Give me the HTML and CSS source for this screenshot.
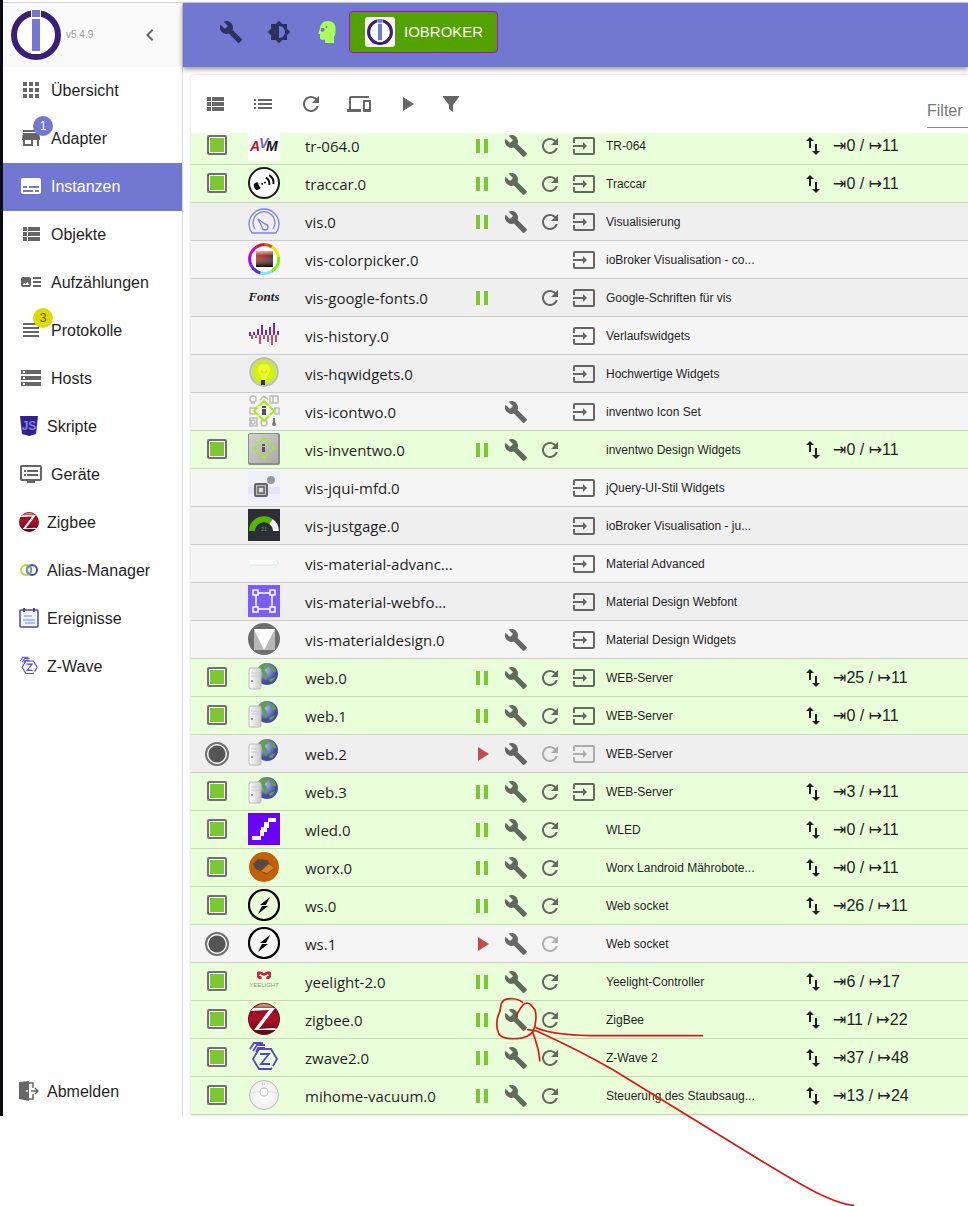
FILE: index.html
```
<!DOCTYPE html>
<html lang="de">
<head>
<meta charset="utf-8">
<title>ioBroker – Instanzen</title>
<link rel="stylesheet" href="styles.css">
</head>
<body>
<svg class="sprite" width="0" height="0" aria-hidden="true">
  <defs>
    <linearGradient id="g-red" x1="0" y1="0" x2="0" y2="1"><stop offset="0" stop-color="#e8b9a0"/><stop offset=".2" stop-color="#8e1020"/><stop offset=".5" stop-color="#b01128"/><stop offset="1" stop-color="#5c0812"/></linearGradient>
    <linearGradient id="g-grey" x1="0" y1="0" x2="1" y2="1"><stop offset="0" stop-color="#d2d2d2"/><stop offset="1" stop-color="#aaa"/></linearGradient>
    <linearGradient id="g-server" x1="0" y1="0" x2="1" y2="0"><stop offset="0" stop-color="#fff"/><stop offset="1" stop-color="#c9c9c9"/></linearGradient>
    <linearGradient id="g-dark" x1="0" y1="0" x2="1" y2="1"><stop offset="0" stop-color="#e03a3a"/><stop offset=".5" stop-color="#8a3030"/><stop offset="1" stop-color="#111"/></linearGradient>
    <linearGradient id="g-fade" x1="0" y1="0" x2="0" y2="1"><stop offset="0" stop-color="#fff" stop-opacity=".6"/><stop offset=".3" stop-color="#fff" stop-opacity="0"/><stop offset="1" stop-color="#000" stop-opacity=".9"/></linearGradient>
    <radialGradient id="g-bulb"><stop offset="0" stop-color="#eaff2c"/><stop offset=".6" stop-color="#d2f500"/><stop offset="1" stop-color="#c6d39a"/></radialGradient>
    <radialGradient id="g-globe" cx=".4" cy=".35"><stop offset="0" stop-color="#b4bdf4"/><stop offset=".6" stop-color="#757ed6"/><stop offset="1" stop-color="#474c98"/></radialGradient>
    <radialGradient id="g-vac"><stop offset="0" stop-color="#fff"/><stop offset="1" stop-color="#ececec"/></radialGradient>
  </defs>
  <symbol id="i-build" viewBox="0 0 24 24"><path d="M22.7 19l-9.1-9.1c.9-2.3.4-5-1.5-6.9-2-2-5-2.4-7.4-1.3L9 6 6 9 1.6 4.7C.4 7.1.9 10.1 2.9 12.1c1.9 1.9 4.6 2.4 6.9 1.5l9.1 9.1c.4.4 1 .4 1.4 0l2.3-2.3c.5-.4.5-1.1.1-1.4z"/></symbol>
  <symbol id="i-refresh" viewBox="0 0 24 24"><path d="M17.65 6.35C16.2 4.9 14.21 4 12 4c-4.42 0-7.99 3.58-7.99 8s3.57 8 7.99 8c3.73 0 6.84-2.55 7.73-6h-2.08c-.82 2.33-3.04 4-5.65 4-3.31 0-6-2.69-6-6s2.69-6 6-6c1.66 0 3.14.69 4.22 1.78L13 11h7V4l-2.35 2.35z"/></symbol>
  <symbol id="i-input" viewBox="0 0 24 24"><path d="M21 3.01H3c-1.1 0-2 .9-2 2V9h2V4.99h18v14.03H3V15H1v4.01c0 1.1.9 1.98 2 1.98h18c1.1 0 2-.88 2-1.98v-14c0-1.11-.9-2-2-2zM11 16l4-4-4-4v3H1v2h10v3z"/></symbol>
  <symbol id="i-pause" viewBox="0 0 24 24"><path d="M6 19h4V5H6v14zm8-14v14h4V5h-4z"/></symbol>
  <symbol id="i-play" viewBox="0 0 24 24"><path d="M8 5v14l11-7z"/></symbol>
  <symbol id="i-swap" viewBox="0 0 24 24"><path d="M9 3L5 6.99h3V14h2V6.99h3L9 3zm7 14.01V10h-2v7.01h-3L15 21l4-3.99h-3z"/></symbol>
  <symbol id="i-brightness" viewBox="0 0 24 24"><path d="M20 15.31L23.31 12 20 8.69V4h-4.69L12 .69 8.69 4H4v4.69L.69 12 4 15.31V20h4.69L12 23.31 15.31 20H20v-4.69zM12 18V6c3.31 0 6 2.69 6 6s-2.69 6-6 6z"/></symbol>
  <symbol id="i-head" viewBox="0 0 24 24"><path fill-rule="evenodd" d="M13 1C8 1 5.200 4.500 5 8.500L3.500 13c-.2.600.2 1 .7 1H5v4c0 1 .6 1.700 1.600 1.700H10V23h9v-6c1-1.500 1.500-3.500 1.500-6V8C20.500 4 17.500 1 13 1zM7.600 7.800a2 2 0 1 0 0 4 2 2 0 0 0 0-4zM11.500 6a1 1 0 1 0 0 2 1 1 0 0 0 0-2z"/></symbol>
  <symbol id="i-chevron" viewBox="0 0 24 24"><path d="M15.410 7.410L14 6l-6 6 6 6 1.410-1.410L10.830 12z"/></symbol>
  <symbol id="i-apps" viewBox="0 0 24 24"><path d="M4 8h4V4H4v4zm6 12h4v-4h-4v4zm-6 0h4v-4H4v4zm0-6h4v-4H4v4zm6 0h4v-4h-4v4zm6-10v4h4V4h-4zm-6 4h4V4h-4v4zm6 6h4v-4h-4v4zm0 6h4v-4h-4v4z"/></symbol>
  <symbol id="i-store" viewBox="0 0 24 24"><path d="M20 4H4v2h16V4zm1 10v-2l-1-5H4l-1 5v2h1v6h10v-6h4v6h2v-6h1zm-9 4H6v-4h6v4z"/></symbol>
  <symbol id="i-subtitles" viewBox="0 0 24 24"><path d="M20 4H4c-1.100 0-2 .9-2 2v12c0 1.100.9 2 2 2h16c1.100 0 2-.9 2-2V6c0-1.100-.9-2-2-2zM4 12h4v2H4v-2zm10 6H4v-2h10v2zm6 0h-4v-2h4v2zm0-4H10v-2h10v2z"/></symbol>
  <symbol id="i-viewlist" viewBox="0 0 24 24"><path d="M4 14h4v-4H4v4zm0 5h4v-4H4v4zM4 9h4V5H4v4zm5 5h12v-4H9v4zm0 5h12v-4H9v4zM9 5v4h12V5H9z"/></symbol>
  <symbol id="i-list" viewBox="0 0 24 24"><path d="M3 13h2v-2H3v2zm0 4h2v-2H3v2zm0-8h2V7H3v2zm4 4h14v-2H7v2zm0 4h14v-2H7v2zM7 7v2h14V7H7z"/></symbol>
  <symbol id="i-devices" viewBox="0 0 24 24"><path d="M4 6h18V4H4c-1.100 0-2 .9-2 2v11H0v3h14v-3H4V6zm19 2h-6c-.55 0-1 .45-1 1v10c0 .55.45 1 1 1h6c.55 0 1-.45 1-1V9c0-.55-.45-1-1-1zm-1 9h-4v-7h4v7z"/></symbol>
  <symbol id="i-filter" viewBox="0 0 24 24"><path d="M4 4h16v1l-6 8v7l-4-3v-4L4 5z"/></symbol>
  <symbol id="i-arttrack" viewBox="0 0 24 24"><path d="M22 13h-8v-2h8v2zm0-6h-8v2h8V7zm-8 10h8v-2h-8v2zm-2-8v6c0 1.100-.9 2-2 2H4c-1.100 0-2-.9-2-2V9c0-1.100.9-2 2-2h6c1.100 0 2 .9 2 2zm-1.500 6l-2.250-3-1.750 2.260-1.250-1.510L3.500 15h7z"/></symbol>
  <symbol id="i-headline" viewBox="0 0 24 24"><path d="M4 15h16v-2H4v2zm0 4h16v-2H4v2zm0-8h16V9H4v2zm0-6v2h16V5H4z"/></symbol>
  <symbol id="i-storage" viewBox="0 0 24 24"><path d="M2 20h20v-4H2v4zm2-3h2v2H4v-2zM2 4v4h20V4H2zm4 3H4V5h2v2zm-4 7h20v-4H2v4zm2-3h2v2H4v-2z"/></symbol>
  <symbol id="i-dvr" viewBox="0 0 24 24"><path d="M21 3H3c-1.100 0-2 .9-2 2v12c0 1.100.9 2 2 2h5v2h8v-2h5c1.100 0 2-.9 2-2V5c0-1.100-.9-2-2-2zm0 14H3V5h18v12zm-2-9H8v2h11V8zm0 4H8v2h11v-2zM7 8H5v2h2V8zm0 4H5v2h2v-2z"/></symbol>
  <symbol id="i-logout" viewBox="0 0 20 20"><path fill="#666" d="M0 1l10-1v20L0 18z"/><path d="M10 2h4v5M14 13v5h-4M12 10h6M16 7l3 3-3 3" fill="none" stroke="#666" stroke-width="1.500"/><circle cx="8" cy="10" r="1" fill="#fff"/></symbol>

  <symbol id="logo-iob" viewBox="0 0 50 50"><circle cx="25" cy="25" r="22" fill="#fff" stroke="#3a1f78" stroke-width="6"/><path fill="#fff" d="M20 0h10v44H20z"/><path fill="#7277d2" d="M21 0h8v7h-8zM21 9h8v32h-8z"/></symbol>
  <symbol id="l-js" viewBox="0 0 20 20"><path fill="#34208a" d="M1 0h18l-2 18-7 2-7-2z"/><text x="10" y="14" text-anchor="middle" font-size="12" font-weight="bold" fill="#7c81e0">JS</text></symbol>
  <symbol id="l-zigbee" viewBox="0 0 32 32"><circle cx="16" cy="16" r="16" fill="#64101a"/><circle cx="16" cy="16" r="15" fill="url(#g-red)"/><path fill="#fff" d="M5 5h22L11 26l14-1 5 1-3 1H6L21 7 3 8z"/></symbol>
  <symbol id="l-alias" viewBox="0 0 20 20"><g fill="none" stroke-width="2"><circle cx="7" cy="10" r="5" stroke="#bdd23a"/><circle cx="13" cy="10" r="5" stroke="#4b4da0"/><ellipse cx="10" cy="10" rx="2" ry="4" stroke="#6f98a0"/></g></symbol>
  <symbol id="l-events" viewBox="0 0 20 20"><rect x="1" y="2" width="18" height="17" rx="1" fill="#f1f4ff" stroke="#4f4c9c" stroke-width="1.500"/><path d="M5 0v4M15 0v4" stroke="#4f4c9c" stroke-width="2"/><path d="M5 8h8M4 12h12M6 15h10" stroke="#9aaee8" stroke-width="1.300"/></symbol>
  <symbol id="l-zwave" viewBox="0 0 32 32"><g fill="none" stroke="#5347c8" stroke-width="1.800"><path d="M24 27l-1 1H11L5 18l6-10h12l6 10-4 7"/><path d="M12 13h9l-8 10h9"/><path d="M8 11l2-4h7M5 10l4-6h8M2 8l4-6h9"/></g></symbol>
  <symbol id="l-avm" viewBox="0 0 32 32"><path fill="#fff" d="M0 0h32v32H0z"/><g font-size="14" font-weight="bold" font-style="italic"><text x="2" y="22" fill="#b01828">A</text><text x="18" y="22" fill="#111">M</text><text x="11" y="19" fill="#6a5fe0">V</text></g></symbol>
  <symbol id="l-traccar" viewBox="0 0 32 32"><circle cx="16" cy="16" r="15" fill="#fff" stroke="#1c1c1c" stroke-width="2"/><g transform="rotate(-25 16 16)" fill="#111"><path d="M6 13c2-1 4-1 5 0-1 2-1 4 0 6-2 1-4 1-5 0-1-2-1-4 0-6z"/><circle cx="14" cy="16" r="1"/><circle cx="17" cy="16" r="1"/><path d="M20 12c2 3 2 5 0 8M24 11c2 3 2 7 0 10" fill="none" stroke="#111" stroke-width="2"/></g></symbol>
  <symbol id="l-vis" viewBox="0 0 32 32"><g fill="none" stroke="#7b82e6" stroke-width="1.300"><path d="M4 28a15 15 0 1 1 24 0z"/><path d="M7 24a11 11 0 1 1 18 0M10 14l4 8a3 3 0 1 0 3-3z"/></g></symbol>
  <symbol id="l-color" viewBox="0 0 32 32"><circle cx="16" cy="16" r="15" fill="#fff"/><g fill="none" stroke-width="3"><path stroke="#d01838" d="M8.500 4a14.500 14.500 0 0 1 7.500-2.500"/><path stroke="#e04a10" d="M16 1.500a14.500 14.500 0 0 1 8 2.500"/><path stroke="#e8e800" d="M24 4a14.500 14.500 0 0 1 6.500 10"/><path stroke="#78f000" d="M30.500 14a14.500 14.500 0 0 1-7 14.500"/><path stroke="#80e8e8" d="M23.500 28.500a14.500 14.500 0 0 1-11 1.500"/><path stroke="#4a30f0" d="M12.500 30A14.500 14.500 0 0 1 3 22"/><path stroke="#a800ff" d="M3 22a14.500 14.500 0 0 1-.5-11"/><path stroke="#e000b0" d="M2.500 11a14.500 14.500 0 0 1 6-7"/></g><path fill="url(#g-dark)" d="M8 8h17v16H8z"/><path fill="url(#g-fade)" d="M8 8h17v16H8z"/></symbol>
  <symbol id="l-fonts" viewBox="0 0 32 32"><text x="16" y="20" text-anchor="middle" font-family="Liberation Serif, serif" font-size="13" font-weight="bold" font-style="italic" fill="#222">Fonts</text></symbol>
  <symbol id="l-history" viewBox="0 0 32 32"><g stroke-width="1.800"><path stroke="#5a10d8" d="M2 17v-4M6 16v-3M10 16v-6M14 16V6M18 16v-5M22 16V8M26 16V4M30 16v-4"/><path stroke="#c4404e" d="M4 16v4M8 16v3M12 16v9M16 16v4M20 16v7M24 16v10M28 16v7"/></g></symbol>
  <symbol id="l-bulb" viewBox="0 0 32 32"><circle cx="16" cy="15" r="14" fill="url(#g-bulb)" stroke="#bbb" stroke-width="1.500"/><path d="M13 22c0-4-4-5-4-9a7 7 0 0 1 14 0c0 4-4 5-4 9" fill="#e6ff30" stroke="#e2e200"/><path d="M13 13l2 3h2l2-3" fill="none" stroke="#e0d000"/><path fill="#333" d="M13 23h4v5h-4z"/></symbol>
  <symbol id="l-icontwo" viewBox="0 0 32 32"><g fill="none" stroke="#bbb" stroke-width="1.500"><circle cx="5" cy="4" r="3"/><path d="M3 8h4M12 5l4-4 4 4M22 1h8v7h-8zM25 1v7M2 13h5v6H2zM27 13h4v6h-4zM2 23h7v8H2z"/><circle cx="5" cy="27" r="2"/><circle cx="16" cy="28" r="3"/></g><path d="M26 23v5" stroke="#777" stroke-width="2"/><circle cx="26" cy="29" r="2" fill="#777"/><path fill="none" stroke="#a2ee12" stroke-width="2" d="M11 11l5-5 5 5M22 12l4 4-4 4M21 21l-5 5-5-5M10 20l-4-4 4-4"/><path fill="#555" d="M14 11h4v2h-4zM14 14h4v6h-4z"/></symbol>
  <symbol id="l-inventwo" viewBox="0 0 32 32"><rect width="32" height="32" rx="2" fill="#8d8d8d"/><rect x="1" y="1" width="29" height="29" rx="1" fill="url(#g-grey)"/><path fill="none" stroke="#a2ee12" stroke-width="1.600" d="M11 10l5-5 5 5M22 11l4 4-4 4M21 20l-5 5-5-5M10 19l-4-4 4-4"/><path fill="#555" d="M14 11h3v2h-3zM14 14h3v5h-3z"/></symbol>
  <symbol id="l-jqui" viewBox="0 0 32 32"><path fill="#eef0fc" d="M0 0h32v32H0z"/><path fill="#e2e5f8" d="M0 16h32v7H0z"/><rect x="7" y="13" width="12" height="12" rx="1" fill="#bbb" stroke="#666" stroke-width="2"/><path fill="#ddd" stroke="#666" stroke-width="1.500" d="M10 16h6v6h-6z"/><circle cx="23" cy="9" r="4" fill="#999"/></symbol>
  <symbol id="l-gage" viewBox="0 0 32 32"><path fill="#2b2e35" d="M0 0h32v32H0z"/><path fill="none" stroke="#55b400" stroke-width="6" d="M4 22a12 12 0 0 1 19-9.500"/><path fill="none" stroke="#eee" stroke-width="6" d="M23 12.500a12 12 0 0 1 5 9.500"/><text x="16" y="22" text-anchor="middle" font-size="5" fill="#888">21</text></symbol>
  <symbol id="l-adv" viewBox="0 0 32 32"><path fill="#f9fdfb" d="M2 13h27v5H2z"/><path d="M2 18h26l3-2-3-3" fill="none" stroke="#d6ece4"/></symbol>
  <symbol id="l-webfont" viewBox="0 0 32 32"><path fill="#7a5cff" d="M0 0h32v32H0z"/><g fill="#7a5cff" stroke="#fff" stroke-width="1.500"><path d="M8 8h16v16H8z"/><path d="M5 5h5v5H5zM22 5h5v5h-5zM5 22h5v5H5zM22 22h5v5h-5z"/></g></symbol>
  <symbol id="l-matdes" viewBox="0 0 32 32"><circle cx="16" cy="16" r="16" fill="#6e6e6e"/><path fill="#b8b8b8" d="M6 6h21v21H6z"/><path fill="#fff" d="M6 6h21L16 27z"/></symbol>
  <symbol id="l-web" viewBox="0 0 32 32"><circle cx="19" cy="13" r="11" fill="url(#g-globe)"/><path fill="#5fa04c" d="M12 5c4-4 8-3 9-1 0 3-5 3-4 6 3 2 3 6 1 9-3-1-2-5-4-7zM22 4c4 1 6 4 6 7-2 1-3-1-5-2zM21 19c2-2 5-2 6-3-1 3-3 5-5 5z"/><rect x="1" y="7" width="12" height="21" rx="2" fill="url(#g-server)" stroke="#bbb"/><path d="M3 12h8M3 15h8" stroke="#ccc"/><circle cx="4" cy="20" r="1" fill="#777"/></symbol>
  <symbol id="l-wled" viewBox="0 0 32 32"><path fill="#6a00ff" d="M0 0h32v32H0z"/><path fill="#fff" d="M4 23h9v4H4zM12 17h4v6h-4zM13 14h6v5h-6zM16 9h5v6h-5zM20 5h8v4h-8z"/></symbol>
  <symbol id="l-worx" viewBox="0 0 32 32"><circle cx="16" cy="16" r="15" fill="#c46008"/><path fill="#9c4d0a" d="M11 19l9-8 7 6-9 7z"/><path fill="#554c46" d="M5 13l5-5 10 1 1 4-8 7-6-2z"/><path fill="#d8851c" d="M13 20l8-7 5 4-7 5z"/></symbol>
  <symbol id="l-ws" viewBox="0 0 32 32"><circle cx="16" cy="16" r="15" fill="none" stroke="#050505" stroke-width="2.200"/><path fill="#050505" d="M22 8l-10 8h6zM10 25l10-8h-6z"/></symbol>
  <symbol id="l-yee" viewBox="0 0 32 32"><path fill="#c3243f" d="M9 7c3-1 5 0 7 1 2-1 4-2 7-1v5c-1 2-4 3-5 1l1-2h2l-1-2-4 2-4-2-1 2h2l1 2c-1 2-4 1-5-1z"/><text x="16" y="22" text-anchor="middle" font-size="6" fill="#8a937e">YEELIGHT</text></symbol>
  <symbol id="l-vac" viewBox="0 0 32 32"><circle cx="16" cy="16" r="14.500" fill="url(#g-vac)" stroke="#bbb"/><path d="M3 14c8-2 18-2 26 0" fill="none" stroke="#e2e2e2"/><circle cx="16" cy="13" r="4" fill="#f8f8f8" stroke="#c4c4c4" stroke-width="1.300"/><path d="M14 5h4" stroke="#aaa" stroke-dasharray="1 1"/></symbol>
</svg>

<div class="window">
  <aside class="sidebar">
    <header class="brand">
      <svg class="brand-logo" role="img" aria-label="ioBroker"><use href="#logo-iob"/></svg>
      <span class="version">v5.4.9</span>
      <button class="icon-button collapse" aria-label="Menü einklappen"><svg class="icon"><use href="#i-chevron"/></svg></button>
    </header>
    <nav class="menu">
      <a class="item" href="#"><svg class="icon"><use href="#i-apps"/></svg>Übersicht</a>
      <a class="item" href="#"><svg class="icon"><use href="#i-store"/></svg>Adapter<span class="badge">1</span></a>
      <a class="item active" href="#" aria-current="page"><svg class="icon"><use href="#i-subtitles"/></svg>Instanzen</a>
      <a class="item" href="#"><svg class="icon"><use href="#i-viewlist"/></svg>Objekte</a>
      <a class="item" href="#"><svg class="icon"><use href="#i-arttrack"/></svg>Aufzählungen</a>
      <a class="item" href="#"><svg class="icon"><use href="#i-headline"/></svg>Protokolle<span class="badge badge-warn">3</span></a>
      <a class="item" href="#"><svg class="icon"><use href="#i-storage"/></svg>Hosts</a>
      <a class="item" href="#"><svg class="picture"><use href="#l-js"/></svg>Skripte</a>
      <a class="item" href="#"><svg class="icon"><use href="#i-dvr"/></svg>Geräte</a>
      <a class="item" href="#"><svg class="picture"><use href="#l-zigbee"/></svg>Zigbee</a>
      <a class="item" href="#"><svg class="picture"><use href="#l-alias"/></svg>Alias-Manager</a>
      <a class="item" href="#"><svg class="picture"><use href="#l-events"/></svg>Ereignisse</a>
      <a class="item" href="#"><svg class="picture"><use href="#l-zwave"/></svg>Z-Wave</a>
      <a class="item logout" href="#"><svg class="picture"><use href="#i-logout"/></svg>Abmelden</a>
    </nav>
  </aside>
  <main class="main">
    <header class="appbar">
      <button class="icon-button" aria-label="Systemeinstellungen"><svg class="icon"><use href="#i-build"/></svg></button>
      <button class="icon-button" aria-label="Farbschema"><svg class="icon"><use href="#i-brightness"/></svg></button>
      <button class="icon-button expert" aria-label="Expertenmodus"><svg class="icon"><use href="#i-head"/></svg></button>
      <button class="host"><svg class="host-logo" viewBox="0 0 50 50"><use href="#logo-iob"/></svg>IOBROKER</button>
    </header>
    <section class="paper">
      <div class="toolbar">
        <button class="icon-button" aria-label="Kategorien"><svg class="icon"><use href="#i-viewlist"/></svg></button>
        <button class="icon-button" aria-label="Liste"><svg class="icon"><use href="#i-list"/></svg></button>
        <button class="icon-button" aria-label="Neu laden"><svg class="icon"><use href="#i-refresh"/></svg></button>
        <button class="icon-button" aria-label="Nur dieser Host"><svg class="icon"><use href="#i-devices"/></svg></button>
        <button class="icon-button" aria-label="Nur laufende"><svg class="icon"><use href="#i-play"/></svg></button>
        <button class="icon-button funnel" aria-label="Filter nach Status"><svg class="icon"><use href="#i-filter"/></svg></button>
        <input class="filter" type="text" placeholder="Filter" aria-label="Filter">
      </div>
      <div class="scroller">
        <table class="instances">
          <colgroup><col class="c-state"><col class="c-logo"><col class="c-name"><col class="c-act"><col class="c-act"><col class="c-act"><col class="c-act"><col class="c-title"><col class="c-swap"><col></colgroup>
          <tbody id="rows"></tbody>
        </table>
      </div>
    </section>
  </main>
</div>
<svg class="ink" viewBox="0 0 1524 708" aria-hidden="true"><path d="M187 97C172 83 145 84 131 91 118 102 125 113 118 128 108 150 109 175 117 193 127 207 150 207 170 206 193 205 213 195 220 183 230 160 229 130 225 120L212 104C206 98 194 98 189 105 177 120 170 130 170 141M203 179L230 183C300 215 400 265 460 300L900 570C1000 630 1110 700 1180 706M218 185C225 205 240 250 239 273M229 173C270 193 370 197 430 197H727"/></svg>
<script src="rows.js"></script>
</body>
</html>
```
FILE: styles.css
```
* { box-sizing: border-box; }
body { position: relative; min-height: 100vh; margin: 0; background: #fff; color: #1f1f1f; font: 16px/24px "Liberation Sans", Arial, sans-serif; }
.sprite { position: absolute; }
button { font: inherit; color: inherit; border: 0; background: none; padding: 0; cursor: pointer; }
.icon { display: block; width: 24px; height: 24px; fill: currentColor; }
.icon-button { display: block; width: 24px; height: 24px; flex: none; color: #666; }

.window { display: flex; padding-top: 2px; border-left: 3px solid #0b0b14; }
.sidebar { display: flex; flex-direction: column; flex: none; width: 180px; border-right: 1px solid #dadada; border-top: 1px solid #d4d4d4; }
.brand { display: flex; align-items: center; height: 64px; padding: 0 20px 0 8px; background: #f9f9f9; }
.brand-logo { width: 50px; height: 50px; }
.version { margin-left: 5px; font-size: 10px; color: #999; }
.collapse { margin-left: auto; }
.menu { display: flex; flex-direction: column; flex: 1; }
.item { position: relative; display: flex; align-items: center; gap: 8px; height: 48px; padding-left: 16px; color: #1f1f1f; text-decoration: none; }
.item svg { margin-bottom: 2px; }
.item .icon { color: #666; }
.picture { width: 20px; height: 20px; }
.item.active, .item.active .icon { color: #fff; }
.item.active { background: #7277d2; }
.badge { position: absolute; left: 30px; top: 1px; width: 20px; height: 20px; border-radius: 50%; background: #7277d2; color: #fff; font-size: 12px; line-height: 20px; text-align: center; }
.badge-warn { background: #dbdb00; color: #555; }
.logout { margin-top: auto; }

.main { flex: 1; min-width: 0; padding-bottom: 1px; border-top: 1px solid #d4d4d4; }
.appbar { position: relative; display: flex; align-items: center; gap: 24px; height: 64px; padding: 0 36px 6px; background: #7277d2; box-shadow: 0 2px 5px rgba(0, 0, 0, .45); }
.appbar .icon-button { color: #2e315c; }
.appbar .expert { color: #a8ff55; margin-right: -14px; }
.host { display: flex; align-items: center; gap: 9px; height: 42px; padding: 0 14px 0 15px; border: 1px solid #c400d0; border-radius: 4px; background: #53a300; color: #fff; font-size: 15px; }
.host-logo { width: 30px; height: 30px; padding: 2px; border-radius: 3px; background: #fff; }

.paper { margin: 8px 0 0 8px; border-radius: 4px 0 0 0; background: #fff; box-shadow: 0 0 3px rgba(0, 0, 0, .2); }
.toolbar { display: flex; align-items: center; gap: 24px; height: 58px; padding-left: 12px; }
.toolbar .funnel { margin-left: -4px; }
.filter { align-self: flex-end; margin: 0 0 5px auto; width: 41px; height: 33px; padding: 0; border: 0; border-bottom: 1px solid #888; background: none; color: #333; font: inherit; }
.filter::placeholder { color: #777; opacity: 1; }

.scroller { overflow: hidden; }
.instances { width: 100%; margin-top: -6px; table-layout: fixed; border-collapse: separate; border-spacing: 0; }
.c-state { width: 52px; }
.c-logo { width: 62px; }
.c-name { width: 160px; }
.c-act { width: 34px; }
.c-title { width: 200px; }
.c-swap { width: 32px; }
.instances td { height: 38px; padding: 0; border-bottom: 1px solid #cbcbcb; background: #f5f5f5; vertical-align: middle; white-space: nowrap; }
.instances tr:nth-child(odd) td { background: #efefef; }
.instances tr.running td { background: #e9ffd9; border-bottom-color: #c3dbb4; }
.state { display: block; width: 20px; height: 20px; margin: 0 auto 2px; padding: 1px; border: 2px solid #707070; border-radius: 2px; background: linear-gradient(#7bc832, #7bc832) content-box, #fff; }
.state.off { width: 24px; height: 24px; margin: 0 auto; border-radius: 50%; background: radial-gradient(circle, #555 8px, #fff 9px); }
.logo { display: block; width: 32px; height: 32px; margin: 0 0 1px 5px; }
.name { font: 15px/24px "Open Sans", "Noto Sans", sans-serif; }
.act { width: 24px; height: 24px; margin: 0 auto; display: block; color: rgba(0, 0, 0, .58); }
.act.pause { color: #7bc832; }
.act.play { color: #bd504c; }
.act:disabled { color: rgba(0, 0, 0, .28); }
.instances td.title { padding-left: 5px; font-size: 12px; }
.counts { color: #222; font-family: "Liberation Sans", Arial, "DejaVu Sans", sans-serif; }
.ink { position: absolute; left: 460px; top: 970px; width: 508px; height: 236px; pointer-events: none; fill: none; stroke: #df1616; stroke-width: 5; stroke-linecap: round; }
```
FILE: rows.js
```
// name, logo, actions (p pause, s start, w settings, r restart, i open, R/I disabled), title, counts
const instances = [
  ["tr-064.0", "avm", "pwri", "TR-064", [0, 11]],
  ["traccar.0", "traccar", "pwri", "Traccar", [0, 11]],
  ["vis.0", "vis", "pwri", "Visualisierung"],
  ["vis-colorpicker.0", "color", "   i", "ioBroker Visualisation - co..."],
  ["vis-google-fonts.0", "fonts", "p ri", "Google-Schriften für vis"],
  ["vis-history.0", "history", "   i", "Verlaufswidgets"],
  ["vis-hqwidgets.0", "bulb", "   i", "Hochwertige Widgets"],
  ["vis-icontwo.0", "icontwo", " w i", "inventwo Icon Set"],
  ["vis-inventwo.0", "inventwo", "pwr ", "inventwo Design Widgets", [0, 11]],
  ["vis-jqui-mfd.0", "jqui", "   i", "jQuery-UI-Stil Widgets"],
  ["vis-justgage.0", "gage", "   i", "ioBroker Visualisation - ju..."],
  ["vis-material-advanc...", "adv", "   i", "Material Advanced"],
  ["vis-material-webfo...", "webfont", "   i", "Material Design Webfont"],
  ["vis-materialdesign.0", "matdes", " w i", "Material Design Widgets"],
  ["web.0", "web", "pwri", "WEB-Server", [25, 11]],
  ["web.1", "web", "pwri", "WEB-Server", [0, 11]],
  ["web.2", "web", "swRI", "WEB-Server"],
  ["web.3", "web", "pwri", "WEB-Server", [3, 11]],
  ["wled.0", "wled", "pwr ", "WLED", [0, 11]],
  ["worx.0", "worx", "pwr ", "Worx Landroid Mährobote...", [0, 11]],
  ["ws.0", "ws", "pwr ", "Web socket", [26, 11]],
  ["ws.1", "ws", "swR ", "Web socket"],
  ["yeelight-2.0", "yee", "pwr ", "Yeelight-Controller", [6, 17]],
  ["zigbee.0", "zigbee", "pwr ", "ZigBee", [11, 22]],
  ["zwave2.0", "zwave", "pwr ", "Z-Wave 2", [37, 48]],
  ["mihome-vacuum.0", "vac", "pwr ", "Steuerung des Staubsaug...", [13, 24]]
];
const actions = {
  p: ["pause", "Anhalten"], s: ["play", "Starten"], w: ["build", "Einstellungen"],
  r: ["refresh", "Neu starten"], i: ["input", "Öffnen"]
};
const actionCell = key => {
  if (key === " ") return "<td></td>";
  const [icon, label] = actions[key.toLowerCase()];
  const off = key !== key.toLowerCase() ? " disabled" : "";
  return `<td><button class="act ${icon}" aria-label="${label}"${off}><svg class="icon"><use href="#i-${icon}"/></svg></button></td>`;
};
document.getElementById("rows").innerHTML = instances.map(([name, logo, keys, title, counts]) => {
  const state = counts ? '<span class="state"></span>' : keys[0] === "s" ? '<span class="state off"></span>' : "";
  return `<tr class="${counts ? "running" : ""}"><td>${state}</td>` +
    `<td><svg class="logo"><use href="#l-${logo}"/></svg></td><td class="name">${name}</td>` +
    [...keys].map(actionCell).join("") +
    `<td class="title">${title}</td>` +
    (counts
      ? `<td><svg class="icon"><use href="#i-swap"/></svg></td><td class="counts">⇥${counts[0]} / ↦${counts[1]}</td>`
      : "<td></td><td></td>") + "</tr>";
}).join("");
```
